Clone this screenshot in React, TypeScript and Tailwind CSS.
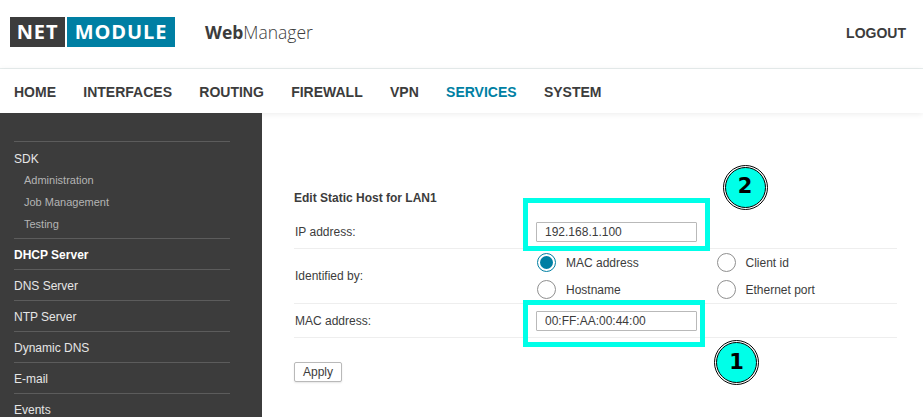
import React from 'react';

const NAV = ['HOME', 'INTERFACES', 'ROUTING', 'FIREWALL', 'VPN', 'SERVICES', 'SYSTEM'];
const SDK_ITEMS = ['Administration', 'Job Management', 'Testing'];
const MENU = ['DHCP Server', 'DNS Server', 'NTP Server', 'Dynamic DNS', 'E-mail', 'Events'];

const Radio = ({ label, checked }: { label: string; checked?: boolean }) => (
  <div className="flex items-center gap-[10px] h-[27px]">
    <span className={`w-[19px] h-[19px] rounded-full border bg-white flex items-center justify-center ${checked ? 'border-[#007fa3]' : 'border-[#8f8f8f]'}`}>
      {checked && <span className="w-[13px] h-[13px] rounded-full bg-[#007fa3]" />}
    </span>
    <span>{label}</span>
  </div>
);

const Badge = ({ n, className }: { n: string; className: string }) => (
  <div className={`absolute w-[45px] h-[45px] rounded-full border border-black bg-white p-[1px] ${className}`}>
    <div className="w-full h-full rounded-full border-[1.5px] border-black bg-[#00ffe8] flex items-center justify-center font-['DejaVu_Sans'] font-bold text-[21px] text-black">
      {n}
    </div>
  </div>
);

export default function App() {
  return (
    <div className="relative w-[923px] h-[417px] overflow-hidden bg-white font-['Liberation_Sans',sans-serif] text-[12px] text-[#3c3c3c]">
      {/* Header */}
      <header className="h-[69px] border-b border-[#e8eeee] flex items-center justify-between pl-[10px] pr-[17px]">
        <div className="flex items-center">
          <div className="flex h-[30px] mb-[4px] font-['Open_Sans',sans-serif] font-bold text-[20px] text-white tracking-[0.9px]">
            <div className="w-[55px] bg-[#3c3c3c] flex items-center justify-center">NET</div>
            <div className="w-[108px] ml-[2px] bg-[#007fa3] flex items-center justify-center">MODULE</div>
          </div>
          <div className="ml-[30px] mb-[3px] font-['Open_Sans',sans-serif] text-[17.5px] text-[#3c3c3c]">
            <span className="font-bold">Web</span>
            <span className="font-light">Manager</span>
          </div>
        </div>
        <span className="font-bold text-[14px] mb-[2px]">LOGOUT</span>
      </header>

      {/* Main nav */}
      <nav className="h-[44px] flex items-center gap-[27.3px] pl-[14px] pt-[2px] font-bold text-[14px] shadow-[0_1px_6px_rgba(0,0,0,0.08)]">
        {NAV.map(item => (
          <span key={item} className={item === 'SERVICES' ? 'text-[#007fa3]' : ''}>{item}</span>
        ))}
      </nav>

      <div className="flex">
        {/* Sidebar */}
        <aside className="w-[262px] h-[304px] bg-[#3c3c3c] pt-[28px] pl-[14px] pr-[32px] text-[#e6e6e6] shrink-0">
          <div className="border-t border-[#5c5c5c] h-[97px]">
            <div className="h-[32px] pt-[1px] flex items-center">SDK</div>
            <div className="-mt-[5px] pl-[10px] text-[11px] text-[#b4b4b4]">
              {SDK_ITEMS.map(item => (
                <div key={item} className="h-[22px] flex items-center">{item}</div>
              ))}
            </div>
          </div>
          {MENU.map(item => (
            <div
              key={item}
              className={`border-t border-[#5c5c5c] h-[31px] pt-[2px] flex items-center ${item === 'DHCP Server' ? 'font-bold text-white' : ''}`}
            >
              {item}
            </div>
          ))}
        </aside>

        {/* Content */}
        <main className="flex-1 pl-[32px] pr-[27px] pt-[77px]">
          <h2 className="font-bold h-[25px] leading-[16px]">Edit Static Host for LAN1</h2>
          <div className="flex items-center h-[34px] border-b border-[#eeeeee] pl-[1px]">
            <span className="w-[241px]">IP address:</span>
            <input readOnly value="192.168.1.100" className="w-[161px] h-[20px] border border-[#b9b9b9] rounded-[1px] pl-[8px] outline-none" />
          </div>
          <div className="flex items-center h-[55px] border-b border-[#eeeeee] pl-[1px]">
            <span className="w-[242px]">Identified by:</span>
            <div className="grid grid-cols-[179.5px_180px]">
              <Radio label="MAC address" checked />
              <Radio label="Client id" />
              <Radio label="Hostname" />
              <Radio label="Ethernet port" />
            </div>
          </div>
          <div className="flex items-center h-[34px] border-b border-[#eeeeee] pl-[1px]">
            <span className="w-[241px]">MAC address:</span>
            <input readOnly value="00:FF:AA:00:44:00" className="w-[161px] h-[20px] border border-[#b9b9b9] rounded-[1px] pl-[8px] outline-none" />
          </div>
          <button className="mt-[24px] w-[48px] h-[20px] border border-[#b9b9b9] rounded-[2px] shadow-[0_1px_2px_rgba(0,0,0,0.1)] bg-white">Apply</button>
        </main>
      </div>

      {/* Annotations drawn over the screenshot */}
      <div className="absolute left-[523px] top-[198px] w-[187px] h-[53px] border-[5px] border-[#00ffe8]" />
      <div className="absolute left-[523px] top-[300px] w-[182px] h-[47px] border-[5px] border-[#00ffe8]" />
      <Badge n="2" className="left-[722.5px] top-[164.5px]" />
      <Badge n="1" className="left-[714px] top-[340px]" />
    </div>
  );
}
